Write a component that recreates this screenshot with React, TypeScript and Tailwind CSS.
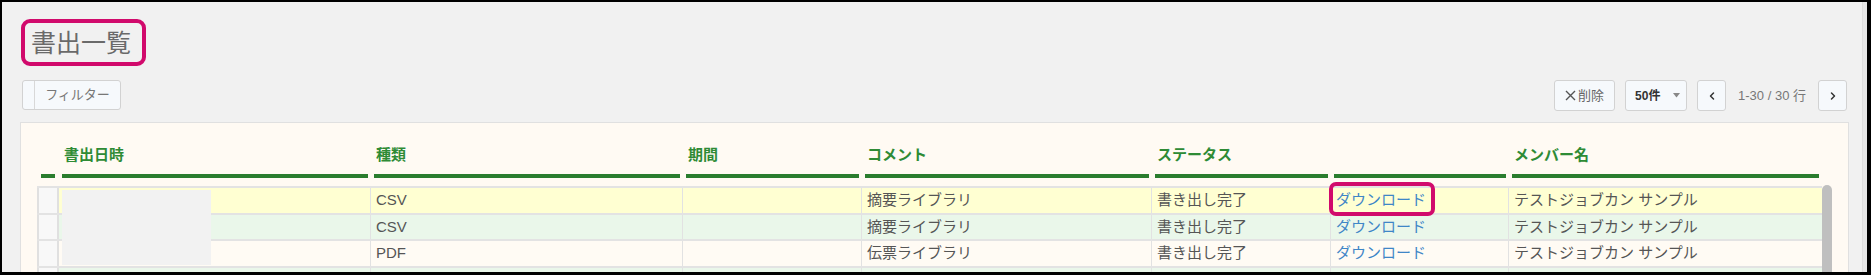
import { ChevronLeft, ChevronRight } from 'lucide-react'

const columns = [
  { key: 'no', label: '', width: 'w-[22px] px-[4px]' },
  { key: 'date', label: '書出日時', width: 'w-[312px] px-[3px]' },
  { key: 'type', label: '種類', width: 'w-[312px] px-[3px]' },
  { key: 'period', label: '期間', width: 'w-[179px] px-[3px]' },
  { key: 'comment', label: 'コメント', width: 'w-[290px] px-[3px]' },
  { key: 'status', label: 'ステータス', width: 'w-[179px] px-[3px]' },
  { key: 'download', label: '', width: 'w-[178px] px-[3px]' },
  { key: 'member', label: 'メンバー名', width: 'w-[313px] px-[3px]' },
]

const rows = [
  { id: 1, type: 'CSV', comment: '摘要ライブラリ', bg: 'bg-[#ffffd2]' },
  { id: 2, type: 'CSV', comment: '摘要ライブラリ', bg: 'bg-[#eaf7ea]' },
  { id: 3, type: 'PDF', comment: '伝票ライブラリ', bg: 'bg-[#fffbf4]' },
  { id: 4, type: 'CSV', comment: '摘要ライブラリ', bg: 'bg-[#eaf7ea]' },
]

function Cell({ width, children, last }: { width: string; children?: React.ReactNode; last?: boolean }) {
  return (
    <div className={`${width} shrink-0 flex items-center pl-[5px] ${last ? '' : 'border-r border-[#e2e2e2]'}`}>
      {children}
    </div>
  )
}

export default function App() {
  return (
    <div className="w-[1871px] h-[275px] overflow-hidden border-black border-t-2 border-l-2 border-r-4 border-b-[3px] bg-[#f1f1f1] font-['Liberation_Sans','Noto_Sans_CJK_JP',sans-serif] flex">
      <div className="flex-1 pl-[18px] pr-[13px] pt-[17px]">
        {/* title */}
        <div className="ml-[1px] w-[125px] h-[47px] border-4 border-[#d10a6c] rounded-[9px] flex items-center pl-[6px]">
          <h1 className="text-[25px] leading-[30px] text-[#6a6a6a] font-normal">書出一覧</h1>
        </div>

        {/* toolbar */}
        <div className="mt-[14px] flex items-start justify-between">
          <button className="ml-[2px] w-[99px] h-[30px] flex rounded-[3px] border border-[#d2d2d2] bg-[#f6f9fc]">
            <span className="w-[12px] h-full border-r border-[#d8d8d8]" />
            <span className="flex-1 h-full flex items-center justify-center text-[13px] text-[#777]">フィルター</span>
          </button>
          <div className="flex items-center mr-[2px]">
            <button className="w-[61px] h-[31px] flex items-center justify-center gap-[2px] rounded-[3px] border border-[#d2d2d2] bg-[#f6f9fc] text-[13px] text-[#666]">
              <svg width="11" height="11" viewBox="0 0 11 11" className="text-[#555]">
                <path d="M1 1 L10 10 M10 1 L1 10" stroke="currentColor" strokeWidth="1.4" fill="none" />
              </svg>
              <span>削除</span>
            </button>
            <button className="ml-[10px] w-[62px] h-[31px] flex items-center gap-[13px] pl-[9px] rounded-[3px] border border-[#d2d2d2] bg-[#f6f9fc] text-[12px] font-bold text-[#333]">
              <span>50件</span>
              <svg width="7" height="5" viewBox="0 0 7 5">
                <path d="M0 0 L7 0 L3.5 4.5 Z" fill="#888" />
              </svg>
            </button>
            <button className="ml-[10px] w-[29px] h-[31px] flex items-center justify-center rounded-[3px] border border-[#d2d2d2] bg-[#f6f9fc] text-[#333]">
              <ChevronLeft className="w-[12px] h-[12px]" strokeWidth={3} />
            </button>
            <span className="mx-[12px] text-[13px] text-[#777]">1-30 / 30 行</span>
            <button className="w-[29px] h-[31px] flex items-center justify-center rounded-[3px] border border-[#d2d2d2] bg-[#f6f9fc] text-[#333]">
              <ChevronRight className="w-[12px] h-[12px]" strokeWidth={3} />
            </button>
          </div>
        </div>

        {/* panel */}
        <div className="mt-[11px] border border-[#e0e0e0] bg-[#fffaf3] px-[16px] h-[200px]">
          <div className="flex">
            {columns.map((c) => (
              <div key={c.key} className={`${c.width} shrink-0`}>
                <div className="pt-[22px] pb-[9px] pl-[2px] border-b-4 border-[#2a7d2e] h-[55px] text-[15px] leading-[20px] font-bold text-[#2e8b35]">
                  {c.label}
                </div>
              </div>
            ))}
          </div>

          <div className="mt-[8px] flex relative">
            <div className="w-[1785px] border-t-2 border-[#e3e3e3] relative">
              {rows.map((r) => (
                <div key={r.id} className={`flex h-[26.67px] border-b-2 border-[#e3e3e3] ${r.bg} text-[15px] text-[#555]`}>
                  <div className="w-[22px] shrink-0 border-x-2 border-[#e0e0e0] bg-[#f8f8f8]" />
                  <Cell width="w-[312px]" />
                  <Cell width="w-[312px]">{r.type}</Cell>
                  <Cell width="w-[179px]" />
                  <Cell width="w-[290px]">{r.comment}</Cell>
                  <Cell width="w-[179px]">書き出し完了</Cell>
                  <Cell width="w-[178px]">
                    <span className="text-[#3f86c7]">ダウンロード</span>
                  </Cell>
                  <Cell width="w-[313px]" last>
                    テストジョブカン サンプル
                  </Cell>
                </div>
              ))}
              {/* redacted dates */}
              <div className="absolute left-[25px] top-[2px] w-[149px] h-[75px] bg-[#f2f2f2]" />
              {/* highlight */}
              <div className="absolute left-[1292px] top-[-6px] w-[106px] h-[34px] border-4 border-[#d10a6c] rounded-[7px]" />
            </div>
            <div className="w-[10px] mt-[-1px] h-[120px] rounded-t-[5px] bg-[#bfbfbf]" />
          </div>
        </div>
      </div>
      <div className="w-[5px] shrink-0 bg-[#e7e7e7] border-l border-[#dedede]" />
    </div>
  )
}
